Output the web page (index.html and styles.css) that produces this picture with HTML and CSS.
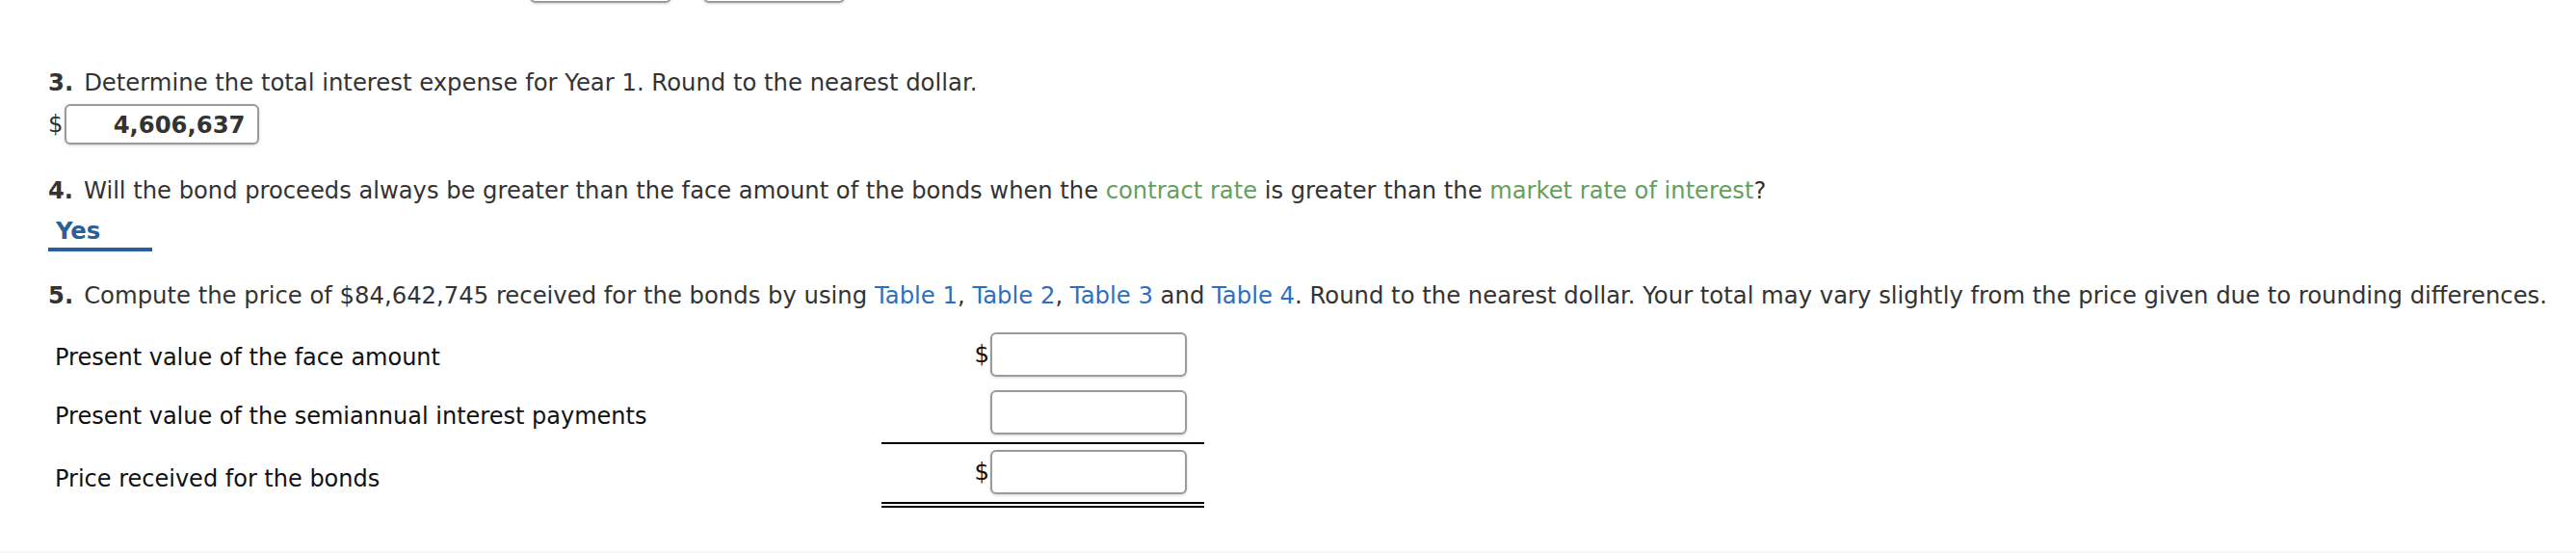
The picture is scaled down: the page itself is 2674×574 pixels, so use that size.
FILE: index.html
```html
<!DOCTYPE html>
<html lang="en">
<head>
<meta charset="utf-8">
<title>Bond problem</title>
<link rel="stylesheet" href="styles.css">
</head>
<body>
<div class="page">
  <div class="top-inputs">
    <input class="field field-top" type="text">
    <input class="field field-top" type="text">
  </div>

  <p class="q q3"><b class="num">3.</b>Determine the total interest expense for Year 1. Round to the nearest dollar.</p>
  <div class="answer-row">
    <span class="dollar">$</span><input class="field field-ans" type="text" value="4,606,637">
  </div>

  <p class="q q4"><b class="num">4.</b>Will the bond proceeds always be greater than the face amount of the bonds when the <span class="term">contract rate</span> is greater than the <span class="term">market rate of interest</span>?</p>
  <div class="select-yes"><span>Yes</span></div>

  <p class="q q5"><b class="num">5.</b>Compute the price of $84,642,745 received for the bonds by using <a class="link">Table 1</a>, <a class="link">Table 2</a>, <a class="link">Table 3</a> and <a class="link">Table 4</a>. Round to the nearest dollar. Your total may vary slightly from the price given due to rounding differences.</p>

  <div class="calc">
    <div class="label">Present value of the face amount</div>
    <div class="val r1"><span class="dollar d2">$</span><input class="field field-calc" type="text"></div>
    <div class="label">Present value of the semiannual interest payments</div>
    <div class="val r2"><input class="field field-calc" type="text"></div>
    <div class="label">Price received for the bonds</div>
    <div class="val r3"><span class="dollar d2">$</span><input class="field field-calc" type="text"></div>
  </div>
</div>
</body>
</html>
```
FILE: styles.css
```css
html, body {
  margin: 0;
  padding: 0;
}
body {
  background: #f6f6f6;
  font-family: "DejaVu Sans", Verdana, sans-serif;
  font-size: 24.3px;
  color: #333;
}
.page {
  background: #fff;
  height: 572px;
  padding-left: 50px;
  box-sizing: border-box;
  overflow: hidden;
}
.field {
  box-sizing: border-box;
  border: 2px solid #9b9b9b;
  border-radius: 6px;
  background: #fff;
  box-shadow: 0 1px 3px rgba(0, 0, 0, 0.18);
  font-family: "DejaVu Sans", Verdana, sans-serif;
  font-size: 24.3px;
  color: #333;
  outline: none;
  margin: 0;
}
.top-inputs {
  display: flex;
  align-items: flex-end;
  gap: 33px;
  height: 3px;
  margin-left: 500px;
}
.field-top {
  width: 147px;
  height: 46px;
  flex: none;
}
.q {
  margin: 0;
  line-height: 34px;
  white-space: nowrap;
}
.num {
  font-weight: bold;
  margin-right: 11px;
}
.q3 {
  margin-top: 66px;
}
.answer-row {
  display: flex;
  align-items: center;
  margin-top: 5px;
  height: 42px;
}
.dollar {
  line-height: 1;
  margin-right: 2px;
}
.field-ans {
  width: 202px;
  height: 42px;
  text-align: right;
  padding: 0 13px 0 0;
  font-weight: bold;
}
.q4 {
  margin-top: 31px;
  font-size: 24.2px;
}
.term {
  color: #64a05e;
}
.select-yes {
  width: 108px;
  margin-top: 8px;
  padding-bottom: 1px;
  border-bottom: 4px solid #2b5f99;
  line-height: 33px;
}
.select-yes span {
  padding-left: 8px;
  font-weight: bold;
  color: #2b5f99;
}
.q5 {
  margin-top: 29px;
}
.link {
  color: #2d6fbf;
  text-decoration: none;
}
.calc {
  display: grid;
  grid-template-columns: 865px 335px;
  align-items: stretch;
  margin-top: 14px;
}
.label {
  display: flex;
  align-items: center;
  padding: 5px 0 0 7px;
  color: #111;
  font-size: 24px;
  white-space: nowrap;
}
.val {
  display: flex;
  align-items: center;
  justify-content: flex-end;
  padding-right: 18px;
  color: #111;
}
.r1 {
  padding-top: 7px;
  padding-bottom: 7px;
}
.r2 {
  padding-top: 7px;
  padding-bottom: 8px;
  border-bottom: 2px solid #000;
}
.r3 {
  padding-top: 6px;
  padding-bottom: 8px;
  border-bottom: 6px double #000;
}
.d2 {
  margin-right: 1px;
}
.field-calc {
  width: 204px;
  height: 46px;
  flex: none;
}
```
